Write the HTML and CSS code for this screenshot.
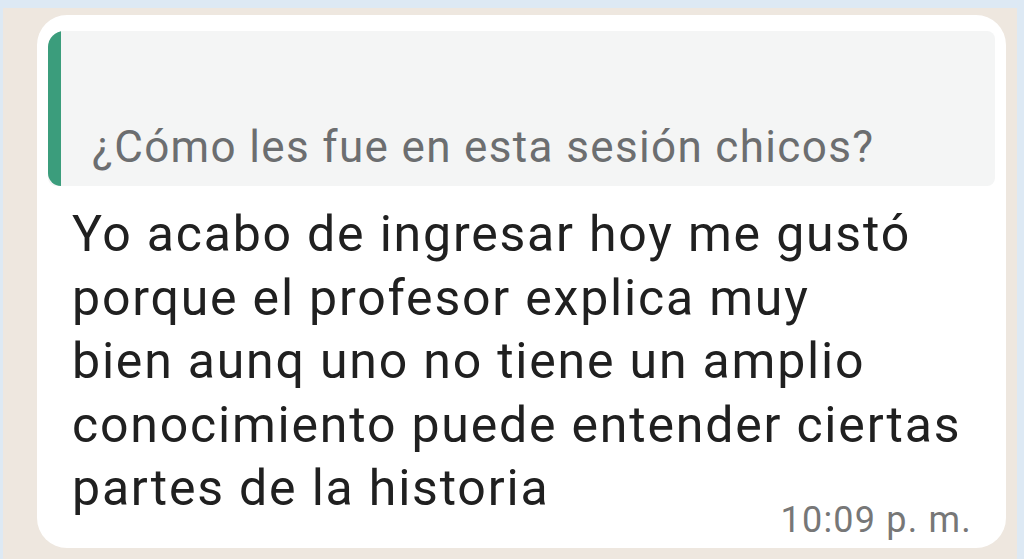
FILE: index.html
```html
<!DOCTYPE html>
<html lang="es">
<head>
<meta charset="UTF-8">
<meta name="viewport" content="width=device-width, initial-scale=1.0">
<link rel="stylesheet" href="styles.css">
<title>Mensaje</title>
</head>
<body>
  <div class="wall">
    <div class="bubble">
      <div class="quote">
        <div class="quote-bar"></div>
        <div class="quote-text">¿Cómo les fue en esta sesión chicos?</div>
      </div>
      <div class="msg">
        <p class="msg-text">Yo acabo de ingresar hoy me gustó<br>porque el profesor explica muy<br>bien aunq uno no tiene un amplio<br>conocimiento puede entender ciertas<br>partes de la historia</p>
        <span class="time">10:09 p. m.</span>
      </div>
    </div>
  </div>
</body>
</html>
```
FILE: styles.css
```css
html, body {
  margin: 0;
  height: 100%;
}
body {
  background-color: #dde9f4;
  font-family: Roboto, "Noto Sans", sans-serif;
  overflow: hidden;
}
.wall {
  background-color: #eee7df;
  margin: 8px 7px 0 3px;
  height: 551px;
  padding: 7px 0 0 34px;
  box-sizing: border-box;
}
.bubble {
  width: 969px;
  height: 533px;
  background-color: #ffffff;
  border-radius: 30px;
  padding: 16px 11px 0 11px;
  box-sizing: border-box;
}
.quote {
  display: flex;
  height: 155px;
  background-color: #f4f5f5;
  border-radius: 16px 8px 8px 8px;
  overflow: hidden;
}
.quote-bar {
  width: 13px;
  background-color: #3b9d7c;
  border-radius: 16px 0 0 16px;
}
.quote-text {
  align-self: flex-end;
  padding: 0 0 13px 31px;
  font-size: 44px;
  letter-spacing: 1.35px;
  color: #6c6e70;
  white-space: nowrap;
}
/* cuerpo del mensaje: texto y hora en la misma celda */
.msg {
  display: grid;
  padding: 17px 23px 0 24px;
}
.msg-text,
.time {
  grid-area: 1 / 1;
}
.msg-text {
  margin: 0;
  font-size: 50px;
  line-height: 63.5px;
  letter-spacing: 1.8px;
  color: #202020;
  white-space: nowrap;
}
.time {
  justify-self: end;
  align-self: end;
  margin-bottom: -20px;
  font-size: 36px;
  letter-spacing: 1.2px;
  color: #777777;
  white-space: nowrap;
}
```
